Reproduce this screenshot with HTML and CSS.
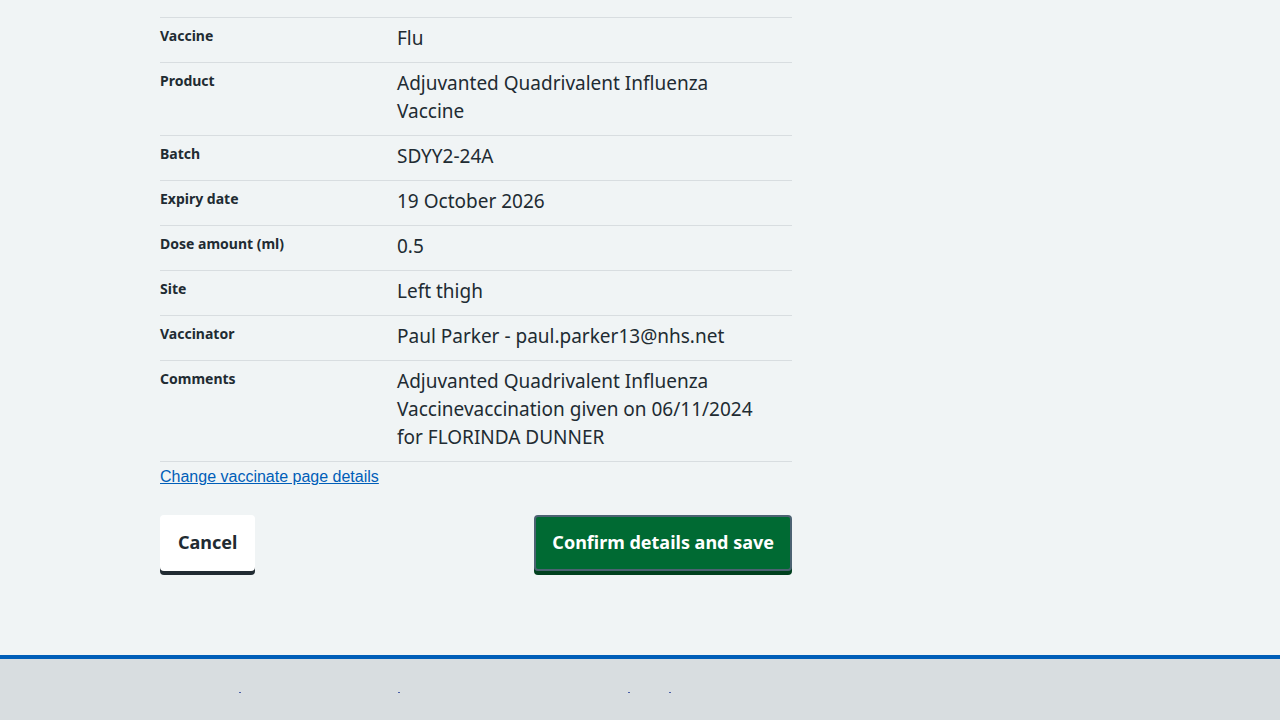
FILE: index.html
```html
<!DOCTYPE html>
<html lang="en">
<head>
<meta charset="utf-8">
<title>Check and confirm</title>
<link rel="stylesheet" href="styles.css">
</head>
<body>
<main class="page">
  <div class="container">
    <dl class="summary">
      <div class="row">
        <dt>Vaccine</dt>
        <dd>Flu</dd>
      </div>
      <div class="row">
        <dt>Product</dt>
        <dd>Adjuvanted Quadrivalent Influenza Vaccine</dd>
      </div>
      <div class="row">
        <dt>Batch</dt>
        <dd>SDYY2-24A</dd>
      </div>
      <div class="row">
        <dt>Expiry date</dt>
        <dd>19 October 2026</dd>
      </div>
      <div class="row">
        <dt>Dose amount (ml)</dt>
        <dd>0.5</dd>
      </div>
      <div class="row">
        <dt>Site</dt>
        <dd>Left thigh</dd>
      </div>
      <div class="row">
        <dt>Vaccinator</dt>
        <dd>Paul Parker - paul.parker13@nhs.net</dd>
      </div>
      <div class="row">
        <dt>Comments</dt>
        <dd>Adjuvanted Quadrivalent Influenza Vaccinevaccination given on 06/11/2024 for FLORINDA DUNNER</dd>
      </div>
    </dl>
    <a class="change-link" href="#">Change vaccinate page details</a>
    <div class="actions">
      <button class="btn btn-secondary" type="button">Cancel</button>
      <button class="btn btn-primary" type="button">Confirm details and save</button>
    </div>
  </div>
</main>
<footer class="footer">
  <div class="footer-links">
    <a href="#" class="dot d1"></a>
    <a href="#" class="dot d2"></a>
    <a href="#" class="dot d3"></a>
    <a href="#" class="dot d4"></a>
  </div>
</footer>
</body>
</html>
```

FILE: styles.css
```css
* { box-sizing: border-box; }
html, body { margin: 0; padding: 0; }
body {
  background: #f0f4f5;
  color: #212b32;
  font-family: "Noto Sans", "Open Sans", Arial, sans-serif;
  height: 720px;
  overflow: hidden;
}
.page {
  height: 655px;
  overflow: hidden;
  padding-top: 17px;
}
.container {
  width: 632px;
  margin: 0 0 0 160px;
}
.summary {
  margin: 0;
  padding: 0;
  border-top: 1px solid #d8dde0;
}
.row {
  display: flex;
  border-bottom: 1px solid #d8dde0;
}
.row dt {
  width: 237px;
  flex: none;
  margin: 0;
  padding: 8px 16px 8px 0;
  font-size: 14px;
  line-height: 20px;
  font-weight: 700;
}
.row dd {
  flex: 1;
  margin: 0;
  padding: 6px 24px 10px 0;
  font-size: 19px;
  line-height: 28px;
}
.change-link {
  display: inline-block;
  margin-top: 6px;
  font-family: "Liberation Sans", Arial, sans-serif;
  font-size: 16px;
  line-height: 18px;
  color: #005eb8;
  text-decoration: underline;
}
.actions {
  display: flex;
  justify-content: space-between;
  margin-top: 28px;
}
.btn {
  height: 56px;
  padding: 0 16px 3px;
  border-radius: 4px;
  font-family: "Noto Sans", "Open Sans", Arial, sans-serif;
  font-size: 18px;
  font-weight: 700;
  cursor: pointer;
}
.btn-secondary {
  background: #ffffff;
  color: #212b32;
  border: 2px solid transparent;
  box-shadow: 0 4px 0 #212b32;
}
.btn-primary {
  background: #006a33;
  color: #ffffff;
  border: 2px solid #4c6272;
  box-shadow: 0 4px 0 #00401e;
}
.footer {
  border-top: 4px solid #005eb8;
  background: #d8dde0;
  height: 65px;
}
.footer-links {
  position: relative;
  height: 100%;
}
.dot {
  position: absolute;
  top: 33px;
  width: 2px;
  height: 1px;
  background: #4a5ea8;
}
.d1 { left: 239px; }
.d2 { left: 398px; }
.d3 { left: 628px; }
.d4 { left: 669px; }
```
